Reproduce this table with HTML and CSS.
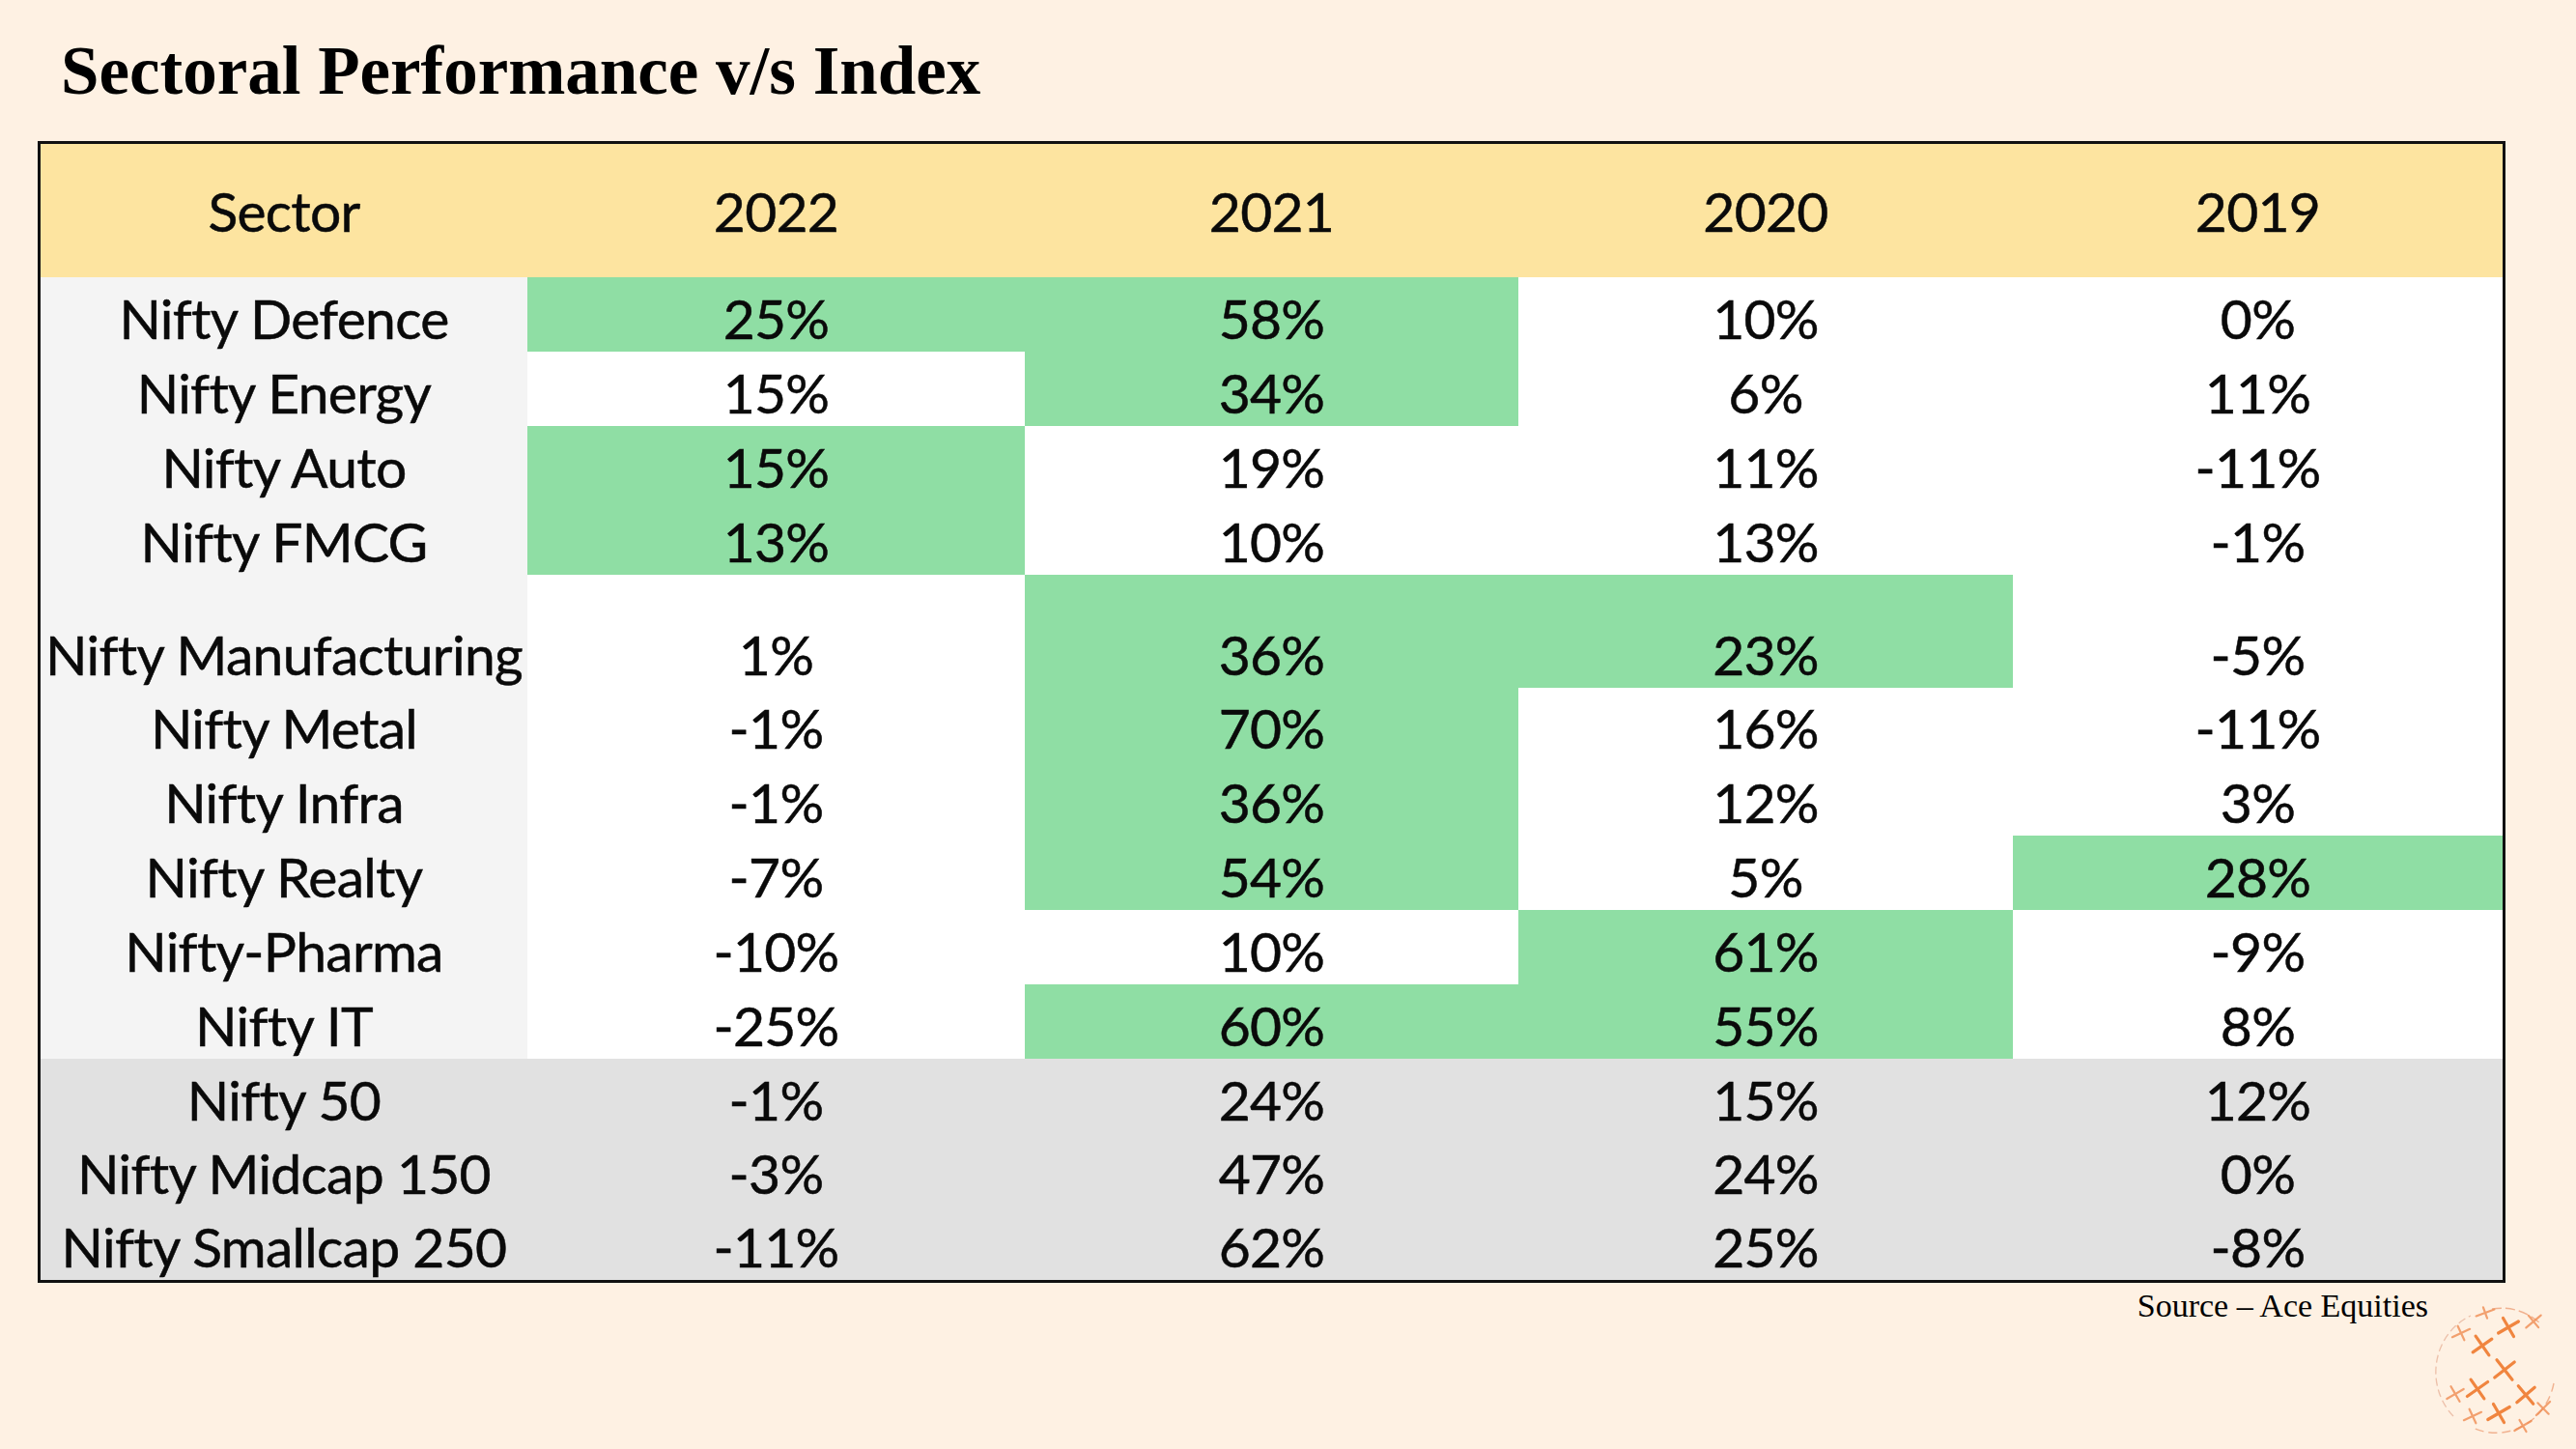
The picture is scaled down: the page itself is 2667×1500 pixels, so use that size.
FILE: index.html
```html
<!DOCTYPE html>
<html lang="en">
<head>
<meta charset="utf-8">
<title>Sectoral Performance v/s Index</title>
<link rel="stylesheet" href="styles.css">
</head>
<body>
<main class="slide">
  <h1 class="title">Sectoral Performance v/s Index</h1>

  <section class="table">
    <div class="row head">
      <div class="cell">Sector</div>
      <div class="cell">2022</div>
      <div class="cell">2021</div>
      <div class="cell">2020</div>
      <div class="cell">2019</div>
    </div>

    <div class="row">
      <div class="cell name">Nifty Defence</div>
      <div class="cell good">25%</div>
      <div class="cell good">58%</div>
      <div class="cell">10%</div>
      <div class="cell">0%</div>
    </div>
    <div class="row">
      <div class="cell name">Nifty Energy</div>
      <div class="cell">15%</div>
      <div class="cell good">34%</div>
      <div class="cell">6%</div>
      <div class="cell">11%</div>
    </div>
    <div class="row">
      <div class="cell name">Nifty Auto</div>
      <div class="cell good">15%</div>
      <div class="cell">19%</div>
      <div class="cell">11%</div>
      <div class="cell">-11%</div>
    </div>
    <div class="row">
      <div class="cell name">Nifty FMCG</div>
      <div class="cell good">13%</div>
      <div class="cell">10%</div>
      <div class="cell">13%</div>
      <div class="cell">-1%</div>
    </div>
    <div class="row tall">
      <div class="cell name">Nifty Manufacturing</div>
      <div class="cell">1%</div>
      <div class="cell good">36%</div>
      <div class="cell good">23%</div>
      <div class="cell">-5%</div>
    </div>
    <div class="row short">
      <div class="cell name">Nifty Metal</div>
      <div class="cell">-1%</div>
      <div class="cell good">70%</div>
      <div class="cell">16%</div>
      <div class="cell">-11%</div>
    </div>
    <div class="row">
      <div class="cell name">Nifty Infra</div>
      <div class="cell">-1%</div>
      <div class="cell good">36%</div>
      <div class="cell">12%</div>
      <div class="cell">3%</div>
    </div>
    <div class="row">
      <div class="cell name">Nifty Realty</div>
      <div class="cell">-7%</div>
      <div class="cell good">54%</div>
      <div class="cell">5%</div>
      <div class="cell good">28%</div>
    </div>
    <div class="row">
      <div class="cell name">Nifty-Pharma</div>
      <div class="cell">-10%</div>
      <div class="cell">10%</div>
      <div class="cell good">61%</div>
      <div class="cell">-9%</div>
    </div>
    <div class="row">
      <div class="cell name">Nifty IT</div>
      <div class="cell">-25%</div>
      <div class="cell good">60%</div>
      <div class="cell good">55%</div>
      <div class="cell">8%</div>
    </div>

    <div class="row index">
      <div class="cell">Nifty 50</div>
      <div class="cell">-1%</div>
      <div class="cell">24%</div>
      <div class="cell">15%</div>
      <div class="cell">12%</div>
    </div>
    <div class="row index short">
      <div class="cell">Nifty Midcap 150</div>
      <div class="cell">-3%</div>
      <div class="cell">47%</div>
      <div class="cell">24%</div>
      <div class="cell">0%</div>
    </div>
    <div class="row index short">
      <div class="cell">Nifty Smallcap 250</div>
      <div class="cell">-11%</div>
      <div class="cell">62%</div>
      <div class="cell">25%</div>
      <div class="cell">-8%</div>
    </div>
  </section>

  <footer class="footer">
    <p class="source">Source – Ace Equities</p>
    <svg class="globe" width="130" height="140" viewBox="0 0 130 140" aria-hidden="true">
      <path d="M 20 118 A 61 64 0 0 1 38 14" fill="none" stroke="#e7b39a" stroke-width="1.3" stroke-dasharray="8 4" opacity="0.8"/>
      <path d="M 60 7 A 61 64 0 0 1 110 22" fill="none" stroke="#eea27a" stroke-width="1.5" stroke-dasharray="10 4" opacity="0.8"/>
      <path d="M 124 84 A 61 64 0 0 1 40 130" fill="none" stroke="#eea27a" stroke-width="1.4" stroke-dasharray="9 5" opacity="0.8"/>
      <g stroke="#f0853f" stroke-width="3.2" stroke-linecap="round">
        <g transform="translate(50,45) rotate(-35)"><line x1="-12" y1="0" x2="12" y2="0"/><line x1="0" y1="-12" x2="0" y2="12"/></g>
        <g transform="translate(77,26) rotate(-30)"><line x1="-12" y1="0" x2="12" y2="0"/><line x1="0" y1="-11" x2="0" y2="11"/></g>
        <g transform="translate(73,70) rotate(-38)"><line x1="-13" y1="0" x2="13" y2="0"/><line x1="0" y1="-13" x2="0" y2="13"/></g>
        <g transform="translate(45,90) rotate(-35)"><line x1="-13" y1="0" x2="13" y2="0"/><line x1="0" y1="-12" x2="0" y2="12"/></g>
        <g transform="translate(95,96) rotate(-40)"><line x1="-12" y1="0" x2="12" y2="0"/><line x1="0" y1="-12" x2="0" y2="12"/></g>
        <g transform="translate(67,115) rotate(-30)"><line x1="-13" y1="0" x2="13" y2="0"/><line x1="0" y1="-11" x2="0" y2="11"/></g>
      </g>
      <g stroke="#f08c52" stroke-width="2.2" stroke-linecap="round" opacity="0.8">
        <g transform="translate(28,32) rotate(-25)"><line x1="-10" y1="0" x2="10" y2="0"/><line x1="0" y1="-8" x2="0" y2="8"/></g>
        <g transform="translate(53,11) rotate(-20)"><line x1="-10" y1="0" x2="10" y2="0"/><line x1="0" y1="-6" x2="0" y2="6"/></g>
        <g transform="translate(103,20) rotate(-40)"><line x1="-10" y1="0" x2="10" y2="0"/><line x1="0" y1="-8" x2="0" y2="8"/></g>
        <g transform="translate(22,95) rotate(-30)"><line x1="-10" y1="0" x2="10" y2="0"/><line x1="0" y1="-9" x2="0" y2="9"/></g>
        <g transform="translate(113,110) rotate(-45)"><line x1="-10" y1="0" x2="10" y2="0"/><line x1="0" y1="-8" x2="0" y2="8"/></g>
        <g transform="translate(40,118) rotate(-25)"><line x1="-10" y1="0" x2="10" y2="0"/><line x1="0" y1="-8" x2="0" y2="8"/></g>
        <g transform="translate(92,128) rotate(-30)"><line x1="-10" y1="0" x2="10" y2="0"/><line x1="0" y1="-7" x2="0" y2="7"/></g>
      </g>
    </svg>
  </footer>
</main>
</body>
</html>
```

FILE: styles.css
```css
* {
  box-sizing: border-box;
}

html, body {
  margin: 0;
  padding: 0;
  background: #fef1e3;
}

.slide {
  width: 2667px;
  height: 1500px;
  display: flex;
  flex-direction: column;
  padding-top: 38px;
  padding-left: 39px;
  background: #fef1e3;
  overflow: hidden;
}

.title {
  margin: 0 0 37px 24px;
  font-family: "Liberation Serif", "Times New Roman", serif;
  font-weight: 700;
  font-size: 71px;
  line-height: 71px;
  color: #000;
}

.table {
  --cols: 504px 515px 511px 512px 507px;
  width: 2555px;
  border: 3px solid #111;
  display: flex;
  flex-direction: column;
  font-family: "Lato", "Liberation Sans", sans-serif;
  font-size: 57px;
  line-height: 57px;
  letter-spacing: -0.7px;
  color: #0a0a0a;
  -webkit-text-stroke: 0.5px #0a0a0a;
}

.row {
  display: grid;
  grid-template-columns: var(--cols);
  height: 77px;
  background: #ffffff;
}

.row.tall {
  height: 117px;
}

.row.short {
  height: 76px;
}

.cell {
  display: flex;
  align-items: flex-end;
  justify-content: center;
  padding-bottom: 6px;
  white-space: nowrap;
}

.cell.name {
  background: #f4f4f4;
}

.cell.good {
  background: #8fdea4;
}

.row.head {
  height: 138px;
  background: #fde4a0;
}

.row.head .cell {
  align-items: center;
  padding-bottom: 0;
}

.row.index {
  background: #e1e1e1;
}

.footer {
  display: flex;
  justify-content: flex-end;
  align-items: flex-start;
  gap: 6px;
  width: 2611px;
}

.source {
  margin: 7px 0 0 0;
  font-family: "Liberation Serif", "Times New Roman", serif;
  font-size: 34px;
  line-height: 34px;
  color: #000;
}

.globe {
  display: block;
  margin-top: 20px;
}
```
